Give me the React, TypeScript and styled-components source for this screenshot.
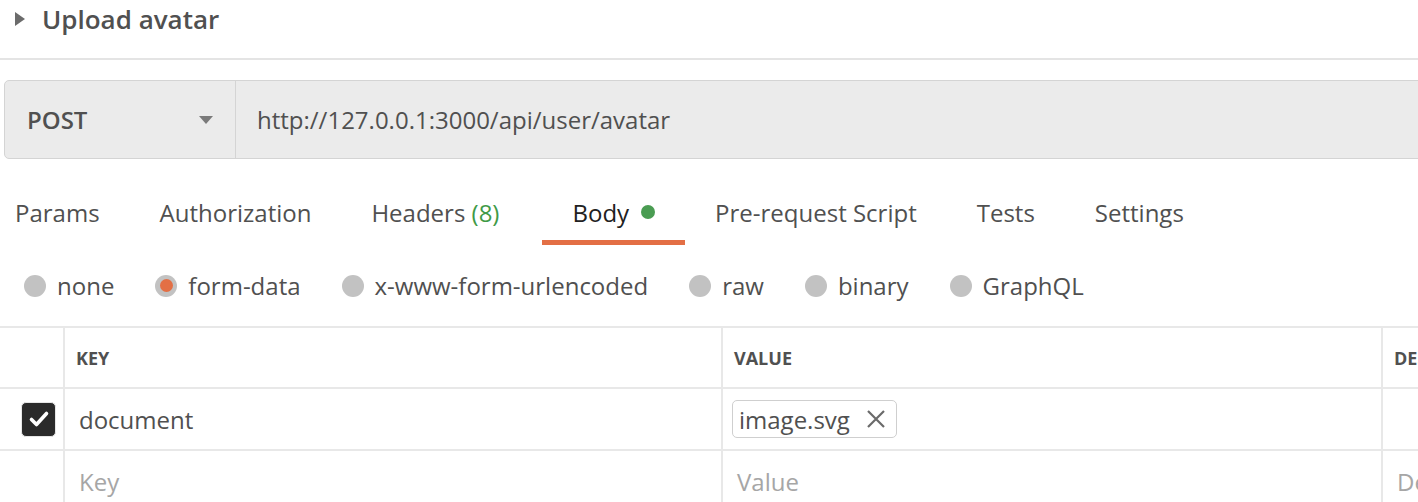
import React from "react";
import styled, { createGlobalStyle } from "styled-components";

const Global = createGlobalStyle`
  html, body { margin: 0; padding: 0; background: #ffffff; }
  body {
    font-family: "Open Sans", "Noto Sans", "Liberation Sans", sans-serif;
    color: #505050;
    overflow: hidden;
    width: 1418px;
    height: 502px;
  }
  * { box-sizing: border-box; }
`;

const Page = styled.div`
  display: flex;
  flex-direction: column;
  width: 1418px;
  overflow: hidden;
`;

const TitleBar = styled.div`
  display: flex;
  align-items: center;
  gap: 17px;
  height: 38px;
  padding-left: 15px;
`;

const Caret = styled.span`
  width: 0;
  height: 0;
  border-top: 7px solid transparent;
  border-bottom: 7px solid transparent;
  border-left: 10px solid #6b6b6b;
`;

const Title = styled.h1`
  margin: 0;
  font-size: 26px;
  font-weight: 600;
  color: #505050;
  line-height: 36px;
`;

const Divider = styled.hr`
  margin: 20px 0 0;
  border: 0;
  border-top: 2px solid #e4e4e4;
`;

const UrlBar = styled.div`
  display: flex;
  margin: 20px 0 0 4px;
  width: 1440px;
  height: 79px;
  background: #ebebeb;
  border: 1.5px solid #d4d4d4;
  border-radius: 5px;
`;

const MethodSelect = styled.div`
  display: flex;
  align-items: center;
  justify-content: space-between;
  width: 231px;
  padding: 0 22px 0 22px;
  border-right: 1.5px solid #d4d4d4;
  font-size: 24px;
  font-weight: 600;
  color: #505050;
`;

const DropArrow = styled.span`
  width: 0;
  height: 0;
  border-left: 7px solid transparent;
  border-right: 7px solid transparent;
  border-top: 8px solid #7a7a7a;
`;

const UrlText = styled.div`
  display: flex;
  align-items: center;
  padding-left: 21px;
  font-size: 24px;
  color: #505050;
`;

const TabBar = styled.div`
  display: flex;
  margin-top: 26px;
  margin-left: -15px;
`;

const Tab = styled.div<{ $active?: boolean; $wide?: boolean }>`
  display: flex;
  align-items: center;
  gap: 12px;
  padding: 0 ${(p) => (p.$wide ? 43 : 30)}px 0 30px;
  height: 60px;
  padding-bottom: 1px;
  font-size: 24px;
  color: ${(p) => (p.$active ? "#212121" : "#505050")};
  border-bottom: 5px solid ${(p) => (p.$active ? "#e36f45" : "transparent")};
`;

const Count = styled.span`
  color: #3f9a47;
`;

const Dot = styled.span`
  width: 14px;
  height: 14px;
  border-radius: 50%;
  background: #4a9c52;
`;

const RadioRow = styled.div`
  display: flex;
  align-items: center;
  gap: 41px;
  height: 81px;
  padding-left: 24px;
`;

const RadioItem = styled.label`
  display: flex;
  align-items: center;
  gap: 11px;
  font-size: 24px;
  color: #505050;
`;

const RadioCircle = styled.span<{ $checked?: boolean }>`
  display: flex;
  align-items: center;
  justify-content: center;
  width: 22px;
  height: 22px;
  border-radius: 50%;
  background: #c2c2c2;
  &::after {
    content: "";
    display: ${(p) => (p.$checked ? "block" : "none")};
    width: 13px;
    height: 13px;
    border-radius: 50%;
    background: #e36f45;
  }
`;

const Table = styled.div`
  display: grid;
  grid-template-columns: 65px 658px 660px 200px;
  border-top: 2px solid #e8e8e8;
`;

const Cell = styled.div<{ $h: number }>`
  display: flex;
  align-items: center;
  height: ${(p) => p.$h}px;
  border-bottom: 2px solid #e8e8e8;
  border-right: 2px solid #e8e8e8;
  overflow: hidden;
  white-space: nowrap;
`;

const CheckCell = styled(Cell)`
  justify-content: center;
  padding-left: 14px;
`;

const HeadText = styled.span`
  padding-left: 11px;
  font-size: 18px;
  font-weight: 700;
  color: #505050;
`;

const CellText = styled.span<{ $placeholder?: boolean }>`
  padding-left: 14px;
  font-size: 24px;
  color: ${(p) => (p.$placeholder ? "#a6a6a6" : "#505050")};
`;

const CheckBox = styled.span`
  display: flex;
  align-items: center;
  justify-content: center;
  width: 35px;
  height: 35px;
  border-radius: 5px;
  background: #2a2a2a;
  border: 1.5px solid #e6e6e6;
`;

const Chip = styled.span`
  display: flex;
  align-items: center;
  gap: 16px;
  margin-left: 9px;
  height: 38px;
  padding: 0 10px 0 6px;
  border: 1.5px solid #cfcfcf;
  border-radius: 5px;
  font-size: 24px;
  color: #505050;
`;

export default function App() {
  return (
    <Page>
      <Global />
      <TitleBar>
        <Caret />
        <Title>Upload avatar</Title>
      </TitleBar>
      <Divider />
      <UrlBar>
        <MethodSelect>
          POST
          <DropArrow />
        </MethodSelect>
        <UrlText>http://127.0.0.1:3000/api/user/avatar</UrlText>
      </UrlBar>
      <TabBar>
        <Tab>Params</Tab>
        <Tab>Authorization</Tab>
        <Tab $wide>
          <span>
            Headers <Count>(8)</Count>
          </span>
        </Tab>
        <Tab $active>
          Body
          <Dot />
        </Tab>
        <Tab>Pre-request Script</Tab>
        <Tab>Tests</Tab>
        <Tab>Settings</Tab>
      </TabBar>
      <RadioRow>
        <RadioItem><RadioCircle />none</RadioItem>
        <RadioItem><RadioCircle $checked />form-data</RadioItem>
        <RadioItem><RadioCircle />x-www-form-urlencoded</RadioItem>
        <RadioItem><RadioCircle />raw</RadioItem>
        <RadioItem><RadioCircle />binary</RadioItem>
        <RadioItem><RadioCircle />GraphQL</RadioItem>
      </RadioRow>
      <Table>
        <Cell $h={61} />
        <Cell $h={61}><HeadText>KEY</HeadText></Cell>
        <Cell $h={61}><HeadText>VALUE</HeadText></Cell>
        <Cell $h={61}><HeadText>DESCRIPTION</HeadText></Cell>

        <CheckCell $h={62}>
          <CheckBox>
            <svg width="24" height="24" viewBox="0 0 24 24">
              <path d="M4.5 12.5 L9.5 17.5 L19.5 6.5" fill="none" stroke="#fff" strokeWidth="3.6" strokeLinecap="round" strokeLinejoin="round" />
            </svg>
          </CheckBox>
        </CheckCell>
        <Cell $h={62}><CellText>document</CellText></Cell>
        <Cell $h={62}>
          <Chip>
            image.svg
            <svg width="20" height="20" viewBox="0 0 20 20">
              <path d="M2 2 L18 18 M18 2 L2 18" stroke="#6a6a6a" strokeWidth="2.2" />
            </svg>
          </Chip>
        </Cell>
        <Cell $h={62} />

        <Cell $h={62} />
        <Cell $h={62}><CellText $placeholder>Key</CellText></Cell>
        <Cell $h={62}><CellText $placeholder>Value</CellText></Cell>
        <Cell $h={62}><CellText $placeholder>Description</CellText></Cell>
      </Table>
    </Page>
  );
}
